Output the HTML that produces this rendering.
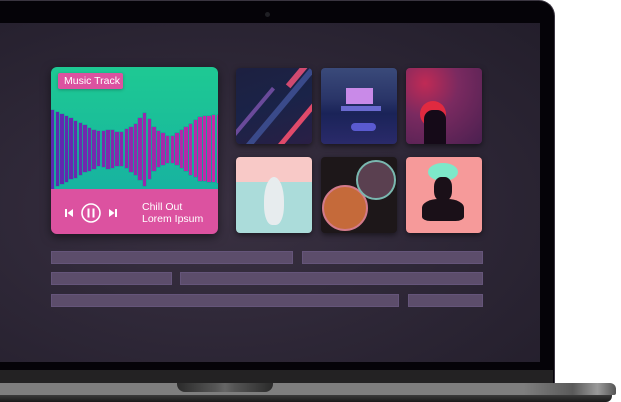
<!DOCTYPE html>
<html><head><meta charset="utf-8"><style>
*{margin:0;padding:0;box-sizing:border-box}
body{width:621px;height:402px;background:#fff;position:relative;overflow:hidden;font-family:"Liberation Sans",sans-serif}
.abs{position:absolute}
#frame{left:-20px;top:0;width:575px;height:384px;background:#050308;border-radius:0 16px 0 0;border:1px solid #3a3540;border-left:none;border-bottom:none}
#screen{left:0;top:23px;width:540px;height:339px;background:radial-gradient(ellipse at 40% 55%,#3a3142 0%,#2f2838 45%,#231e2b 100%)}
#chin{left:0;top:370px;width:553px;height:13px;background:#232223}
#base{left:0;top:383px;width:616px;height:12px;background:linear-gradient(90deg,#7e7e7e 0%,#7e7e7e 85%,#5a5a5a 93%,#9a9a9a 97%,#555 100%);border-radius:0 6px 2px 0}
#base2{left:0;top:395px;width:612px;height:7px;background:linear-gradient(180deg,#3a3a3a,#1a1a1a);border-radius:0 0 6px 0}
#notch{left:177px;top:383px;width:96px;height:9px;background:linear-gradient(90deg,#2a2a2a,#555 40%,#666 50%,#555 60%,#2a2a2a);border-radius:0 0 8px 8px}
#cam{left:265px;top:12px;width:5px;height:5px;border-radius:50%;background:#1f1f24}
#card{left:51px;top:67px;width:167px;height:167px;border-radius:6px;overflow:hidden;box-shadow:0 3px 10px rgba(0,0,0,.5)}
#green{left:0;top:0;width:167px;height:122px;background:linear-gradient(180deg,#1ec993,#17b3a0)}
#pink{left:0;top:122px;width:167px;height:45px;background:#dc52a0}
#tag{left:7px;top:6px;width:65px;height:16px;background:#dc52a0;border-radius:2px;color:#fff;font-size:10.5px;line-height:16px;padding-left:6px;box-shadow:0 1px 3px rgba(0,0,0,.25)}
.bar{position:absolute;width:3.4px;box-shadow:0 0 0 0.5px rgba(40,60,140,.25)}
.txt{color:#fff;font-size:10.5px;line-height:12px}
.alb{position:absolute;width:76px;height:76px;border-radius:4px;overflow:hidden;box-shadow:0 2px 6px rgba(0,0,0,.5)}
.ln{position:absolute;height:13px;background:#5c4d6b;border:1px solid #65557a}
</style></head><body>
<div id="frame" class="abs"></div>
<div id="cam" class="abs"></div>
<div id="screen" class="abs"></div>
<div id="chin" class="abs"></div>
<div id="base" class="abs"></div>
<div id="base2" class="abs"></div>
<div id="notch" class="abs"></div>

<div id="card" class="abs">
  <div id="green" class="abs"></div>
  <div id="bars" class="abs" style="left:0;top:0;width:167px;height:167px"></div>
  <div id="pink" class="abs"></div>
  <div id="tag" class="abs">Music Track</div>
  <svg class="abs" style="left:12px;top:136px" width="60" height="20" viewBox="0 0 60 20">
    <rect x="2" y="6" width="2" height="8" fill="#fff"/><path d="M10 6 L4.5 10 L10 14Z" fill="#fff"/>
    <circle cx="28" cy="10" r="9" fill="none" stroke="#fff" stroke-width="1.6"/>
    <rect x="24.5" y="5.5" width="2" height="9" fill="#fff"/><rect x="29.5" y="5.5" width="2" height="9" fill="#fff"/>
    <path d="M46 6 L51.5 10 L46 14Z" fill="#fff"/><rect x="52" y="6" width="2" height="8" fill="#fff"/>
  </svg>
  <div class="abs txt" style="left:91px;top:134px">Chill Out<br>Lorem Ipsum</div>
</div>

<div class="alb" style="left:236px;top:68px;background:linear-gradient(160deg,#1d2040,#1a2348 50%,#2a1f45);">
  <div class="abs" style="left:-10px;top:30px;width:120px;height:6px;background:#3a4a8a;transform:rotate(-50deg)"></div>
  <div class="abs" style="left:20px;top:50px;width:90px;height:5px;background:#e04a6a;transform:rotate(-50deg)"></div>
  <div class="abs" style="left:45px;top:0px;width:40px;height:6px;background:#d04a70;transform:rotate(-50deg)"></div>
  <div class="abs" style="left:-20px;top:45px;width:70px;height:4px;background:#6a4a9a;transform:rotate(-50deg)"></div>
</div>
<div class="alb" style="left:321px;top:68px;background:linear-gradient(180deg,#3a4a7a 0%,#2a3568 40%,#1a2358 60%,#2a2a6a 100%)">
  <div class="abs" style="left:25px;top:20px;width:27px;height:16px;background:#c98ae8"></div>
  <div class="abs" style="left:20px;top:38px;width:40px;height:5px;background:#6a6ad0"></div>
  <div class="abs" style="left:30px;top:55px;width:25px;height:8px;background:#5a5ad0;border-radius:4px"></div>
</div>
<div class="alb" style="left:406px;top:68px;background:radial-gradient(circle at 25% 20%,#c02a55 0%,#7a2a60 40%,#4a2050 100%)">
  <div class="abs" style="left:14px;top:33px;width:26px;height:26px;border-radius:50%;background:#e02a40"></div>
  <div class="abs" style="left:18px;top:42px;width:22px;height:36px;background:#150a18;border-radius:9px 9px 0 0"></div>
</div>
<div class="alb" style="left:236px;top:157px;background:linear-gradient(180deg,#f8c9c7 0 33%,#abdcda 33% 100%)">
  <div class="abs" style="left:28px;top:20px;width:20px;height:48px;background:#e7ecee;border-radius:50% 50% 40% 40%"></div>
</div>
<div class="alb" style="left:321px;top:157px;background:#1d1719">
  <div class="abs" style="left:1px;top:28px;width:46px;height:46px;border-radius:50%;background:#c56a3a;border:2px solid #d27a8a"></div>
  <div class="abs" style="left:35px;top:3px;width:40px;height:40px;border-radius:50%;background:#5a4050;border:2px solid #7ab8b0"></div>
</div>
<div class="alb" style="left:406px;top:157px;background:#f69a9a">
  <div class="abs" style="left:22px;top:6px;width:30px;height:18px;background:#7de8c9;border-radius:50%"></div>
  <div class="abs" style="left:28px;top:20px;width:18px;height:24px;background:#1a1018;border-radius:40%"></div>
  <div class="abs" style="left:16px;top:42px;width:42px;height:22px;background:#1a1018;border-radius:40% 40% 20% 20%"></div>
</div>

<div class="ln" style="left:51px;top:251px;width:242px"></div>
<div class="ln" style="left:302px;top:251px;width:181px"></div>
<div class="ln" style="left:51px;top:272px;width:121px"></div>
<div class="ln" style="left:180px;top:272px;width:303px"></div>
<div class="ln" style="left:51px;top:294px;width:348px"></div>
<div class="ln" style="left:408px;top:294px;width:75px"></div>

<script>
var pts=[[0,40],[19,31],[39,21],[49,17],[59,20],[69,16],[84,25],[94,37],[104,20],[119,12],[129,18],[149,32],[166,34]];
function h(x){for(var i=0;i<pts.length-1;i++){if(x>=pts[i][0]&&x<=pts[i+1][0]){var t=(x-pts[i][0])/(pts[i+1][0]-pts[i][0]);return pts[i][1]+t*(pts[i+1][1]-pts[i][1]);}}return 34;}
var c=document.getElementById('bars'),s='';
for(var x=0;x<167;x+=4.6){var hh=h(x+1.5);var t=x/166;
var r=Math.round(0x5a+(0xc8-0x5a)*t),g=0x2a,b=Math.round(0xb0+(0xa8-0xb0)*t);
s+='<div class="bar" style="left:'+x.toFixed(1)+'px;top:'+(82-hh).toFixed(0)+'px;height:'+(2*hh).toFixed(0)+'px;background:rgb('+r+','+g+','+b+')"></div>';}
c.innerHTML=s;
</script>
</body></html>
